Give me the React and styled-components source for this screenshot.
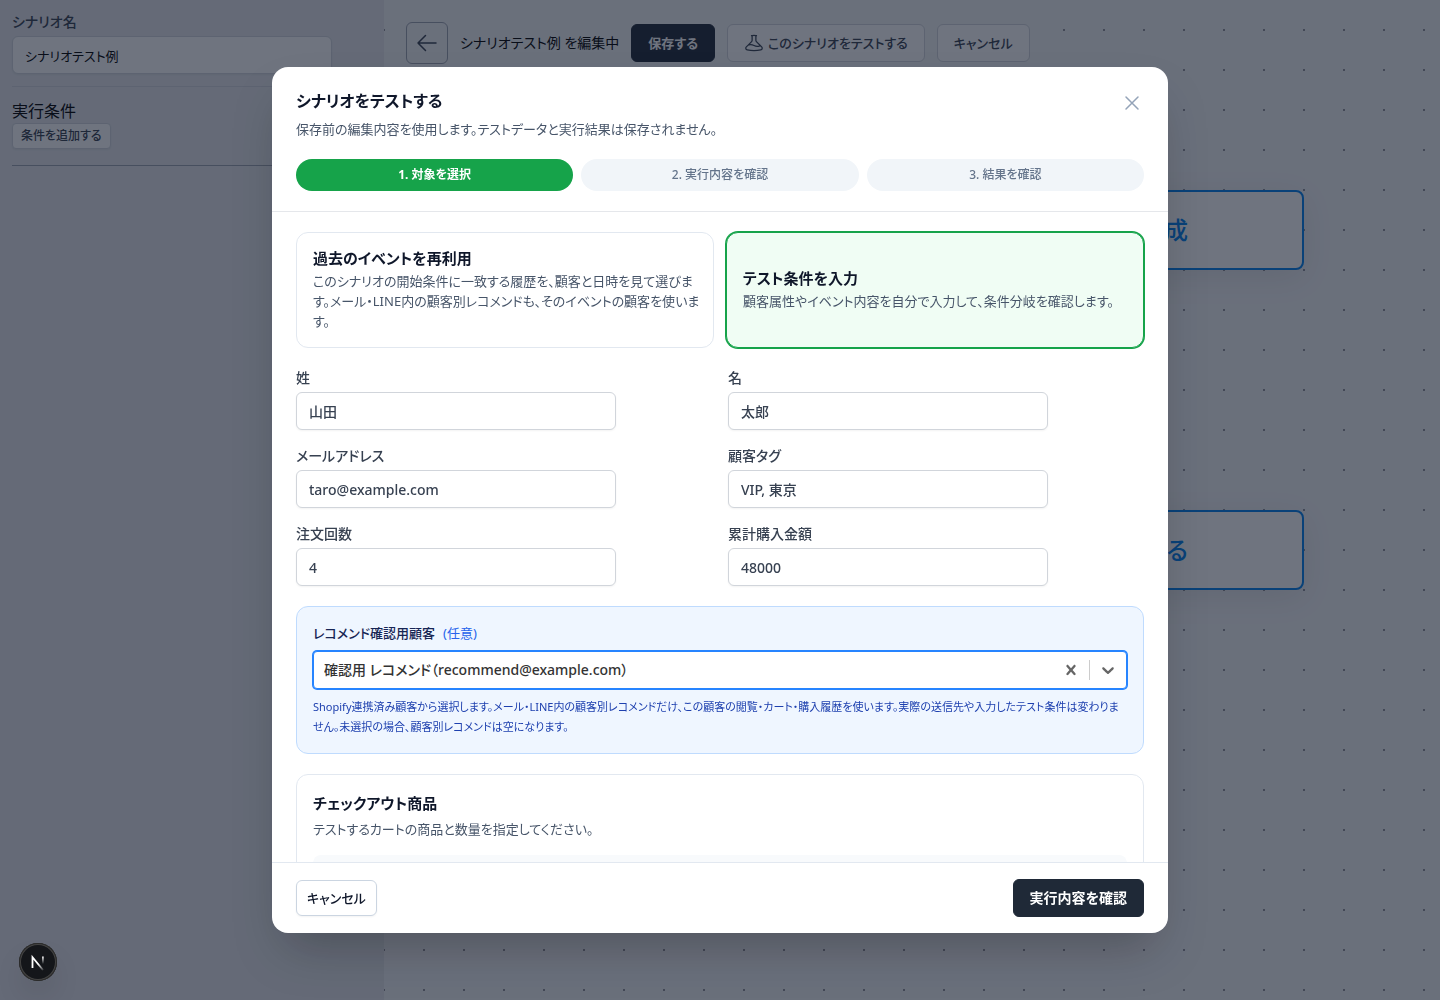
import React, { useState } from "react";
import styled, { createGlobalStyle } from "styled-components";

const STEPS = ["1. 対象を選択", "2. 実行内容を確認", "3. 結果を確認"];

const MODES = [
    {
        id: "history",
        title: "過去のイベントを再利用",
        text: "このシナリオの開始条件に一致する履歴を、顧客と日時を見て選びます。メール・LINE内の顧客別レコメンドも、そのイベントの顧客を使います。",
    },
    {
        id: "manual",
        title: "テスト条件を入力",
        text: "顧客属性やイベント内容を自分で入力して、条件分岐を確認します。",
    },
];

const FIELDS = [
    { name: "lastName", label: "姓" },
    { name: "firstName", label: "名" },
    { name: "email", label: "メールアドレス" },
    { name: "tags", label: "顧客タグ" },
    { name: "orderCount", label: "注文回数" },
    { name: "totalSpent", label: "累計購入金額" },
];

const OutlineIcon = ({ size, path }) => (
    <svg width={size} height={size} viewBox="0 0 24 24" fill="none" stroke="currentColor" strokeWidth="1.5" strokeLinecap="round" strokeLinejoin="round" aria-hidden="true">
        <path d={path} />
    </svg>
);

const ARROW = "M10.5 19.5 3 12m0 0 7.5-7.5M3 12h18";
const CLOSE = "M6 18 18 6M6 6l12 12";
const BEAKER = "M9.75 3.104v5.714a2.25 2.25 0 0 1-.659 1.591L5 14.5M9.75 3.104c-.251.023-.501.05-.75.082m.75-.082a24.301 24.301 0 0 1 4.5 0m0 0v5.714c0 .597.237 1.17.659 1.591L19.8 15.3M14.25 3.104c.251.023.501.05.75.082M19.8 15.3l-1.57.393A9.065 9.065 0 0 1 12 15a9.065 9.065 0 0 0-6.23-.693L5 14.5m14.8.8 1.402 1.402c1.232 1.232.65 3.318-1.067 3.611A48.309 48.309 0 0 1 12 21c-2.773 0-5.491-.235-8.135-.687-1.718-.293-2.3-2.379-1.067-3.61L5 14.5";
const CROSS = "M14.348 14.849c-0.469 0.469-1.229 0.469-1.697 0l-2.651-3.030-2.651 3.029c-0.469 0.469-1.229 0.469-1.697 0-0.469-0.469-0.469-1.229 0-1.697l2.758-3.15-2.759-3.152c-0.469-0.469-0.469-1.228 0-1.697s1.228-0.469 1.697 0l2.652 3.031 2.651-3.031c0.469-0.469 1.228-0.469 1.697 0s0.469 1.229 0 1.697l-2.758 3.152 2.758 3.15c0.469 0.469 0.469 1.229 0 1.698z";
const CHEVRON = "M4.516 7.548c0.436-0.446 1.043-0.481 1.576 0l3.908 3.747 3.908-3.747c0.533-0.481 1.141-0.446 1.574 0 0.436 0.445 0.408 1.197 0 1.615-0.406 0.418-4.695 4.502-4.695 4.502-0.217 0.223-0.502 0.335-0.787 0.335s-0.57-0.112-0.789-0.335c0 0-4.287-4.084-4.695-4.502s-0.436-1.17 0-1.615z";

const SolidIcon = ({ path }) => (
    <svg width="20" height="20" viewBox="0 0 20 20" fill="currentColor" aria-hidden="true">
        <path d={path} />
    </svg>
);

const NextLogo = () => (
    <svg width="38" height="38" viewBox="0 0 38 38" fill="none" aria-hidden="true">
        <defs>
            <linearGradient id="diagonal" x1="21" y1="20" x2="25" y2="26" gradientUnits="userSpaceOnUse">
                <stop stopColor="#fff" />
                <stop offset="1" stopColor="#fff" stopOpacity="0.2" />
            </linearGradient>
            <linearGradient id="stem" x1="24" y1="13" x2="24" y2="21" gradientUnits="userSpaceOnUse">
                <stop stopColor="#fff" />
                <stop offset="1" stopColor="#fff" stopOpacity="0" />
            </linearGradient>
        </defs>
        <path d="M13.5 25V14.2L24 27" stroke="url(#diagonal)" strokeWidth="1.8" />
        <path d="M23.9 13.5V21" stroke="url(#stem)" strokeWidth="1.8" />
    </svg>
);

const App = () => {
    const [scenarioName, setScenarioName] = useState("シナリオテスト例");
    const [mode, setMode] = useState("manual");
    const [customer, setCustomer] = useState("recommend");
    const [form, setForm] = useState({
        lastName: "山田",
        firstName: "太郎",
        email: "taro@example.com",
        tags: "VIP, 東京",
        orderCount: "4",
        totalSpent: "48000",
    });

    const handleChange = (event) => {
        const { name, value } = event.target;
        setForm(prevState => ({ ...prevState, [name]: value }));
    };

    return (
        <>
            <GlobalStyle />
            <Page>
                <Sidebar>
                    <NameSection>
                        <Label htmlFor="scenarioName">シナリオ名</Label>
                        <TextInput id="scenarioName" $plain value={scenarioName} onChange={(e) => setScenarioName(e.target.value)} />
                    </NameSection>
                    <ConditionSection>
                        <ConditionTitle>実行条件</ConditionTitle>
                        <SmallButton type="button">条件を追加する</SmallButton>
                    </ConditionSection>
                </Sidebar>
                <Canvas>
                    <Toolbar>
                        <BackButton type="button" aria-label="戻る"><OutlineIcon size={24} path={ARROW} /></BackButton>
                        <ToolbarTitle>{scenarioName} を編集中</ToolbarTitle>
                        <Button type="button" $primary>保存する</Button>
                        <Button type="button"><OutlineIcon size={20} path={BEAKER} />このシナリオをテストする</Button>
                        <Button type="button">キャンセル</Button>
                    </Toolbar>
                    <Node $top={190}>成</Node>
                    <Node $top={510}>る</Node>
                </Canvas>
            </Page>
            <Overlay>
                <Dialog role="dialog" aria-modal="true" aria-labelledby="dialogTitle">
                    <DialogHeader>
                        <HeaderRow>
                            <div>
                                <DialogTitle id="dialogTitle">シナリオをテストする</DialogTitle>
                                <Description>保存前の編集内容を使用します。テストデータと実行結果は保存されません。</Description>
                            </div>
                            <CloseButton type="button" aria-label="閉じる"><OutlineIcon size={24} path={CLOSE} /></CloseButton>
                        </HeaderRow>
                        <StepList>
                            {STEPS.map((step, index) => <Step key={step} $active={index === 0}>{step}</Step>)}
                        </StepList>
                    </DialogHeader>
                    <DialogBody>
                        <ModeGrid>
                            {MODES.map((item) => (
                                <ModeCard key={item.id} type="button" aria-pressed={mode === item.id} $selected={mode === item.id} onClick={() => setMode(item.id)}>
                                    <ModeTitle>{item.title}</ModeTitle>
                                    <ModeText>{item.text}</ModeText>
                                </ModeCard>
                            ))}
                        </ModeGrid>
                        <FieldGrid>
                            {FIELDS.map((field) => (
                                <Field key={field.name}>
                                    <Label htmlFor={field.name}>{field.label}</Label>
                                    <TextInput id={field.name} name={field.name} value={form[field.name]} onChange={handleChange} />
                                </Field>
                            ))}
                        </FieldGrid>
                        <RecommendBox>
                            <RecommendLabel htmlFor="customer">レコメンド確認用顧客<Optional>(任意)</Optional></RecommendLabel>
                            <SelectBox>
                                <Select id="customer" value={customer} onChange={(e) => setCustomer(e.target.value)}>
                                    <option value="" />
                                    <option value="recommend">確認用 レコメンド（recommend@example.com）</option>
                                </Select>
                                <ClearButton type="button" aria-label="クリア" onClick={() => setCustomer("")}><SolidIcon path={CROSS} /></ClearButton>
                                <Separator />
                                <Arrow><SolidIcon path={CHEVRON} /></Arrow>
                            </SelectBox>
                            <HelpText>Shopify連携済み顧客から選択します。メール・LINE内の顧客別レコメンドだけ、この顧客の閲覧・カート・購入履歴を使います。実際の送信先や入力したテスト条件は変わりません。未選択の場合、顧客別レコメンドは空になります。</HelpText>
                        </RecommendBox>
                        <ProductBox>
                            <ProductTitle>チェックアウト商品</ProductTitle>
                            <Description>テストするカートの商品と数量を指定してください。</Description>
                            <ProductRow />
                        </ProductBox>
                    </DialogBody>
                    <DialogFooter>
                        <CancelButton type="button">キャンセル</CancelButton>
                        <SubmitButton type="button" $primary>実行内容を確認</SubmitButton>
                    </DialogFooter>
                </Dialog>
            </Overlay>
            <DevBadge type="button" aria-label="Next.js"><NextLogo /></DevBadge>
        </>
    );
};

const GlobalStyle = createGlobalStyle`
    *, *::before, *::after {
        box-sizing: border-box;
    }
    body {
        margin: 0;
        color: #000000;
        font-family: "Noto Sans", "Noto Sans CJK JP", sans-serif;
        font-size: 16px;
        line-height: 24px;
        font-feature-settings: "palt";
    }
    h1, h2, h3, p, ol {
        margin: 0;
        padding: 0;
    }
    button, input, select {
        margin: 0;
        font-family: inherit;
        font-feature-settings: inherit;
    }
    svg {
        display: block;
        flex-shrink: 0;
    }
`;

const Page = styled.div`
    display: flex;
    height: 100vh;
    overflow: hidden;
`;
const Sidebar = styled.aside`
    width: 384px;
    flex-shrink: 0;
    padding: 12px;
    background-color: #e5e7eb;
`;
const NameSection = styled.div`
    padding-bottom: 12px;
    border-bottom: 1px solid #d1d5db;
`;
const ConditionSection = styled.div`
    padding: 12px 0 16px;
    border-bottom: 1px solid #9ca3af;
`;
const ConditionTitle = styled.h2`
    font-size: 16px;
    font-weight: 400;
    line-height: 24px;
`;
const SmallButton = styled.button`
    display: block;
    height: 26px;
    padding: 0 8px;
    color: #374151;
    font-size: 12px;
    font-weight: 500;
    line-height: 16px;
    background-color: #ffffff;
    border: 1px solid #d1d5db;
    border-radius: 4px;
    box-shadow: 0 1px 2px rgba(0, 0, 0, 0.05);
`;
const Canvas = styled.main`
    position: relative;
    flex: 1;
    overflow: hidden;
    background-color: #f3f4f6;
    background-image: radial-gradient(circle at center, #91919a 1px, transparent 1px);
    background-size: 40px 40px;
    background-position: -20px 10px;
`;
const Toolbar = styled.div`
    display: flex;
    align-items: center;
    gap: 12px;
    width: fit-content;
    margin: 10px;
    padding: 12px;
    background-color: #f3f4f6;
`;
const ToolbarTitle = styled.h1`
    font-size: 14px;
    font-weight: 400;
    line-height: 24px;
    white-space: nowrap;
`;
const BackButton = styled.button`
    display: flex;
    align-items: center;
    justify-content: center;
    width: 42px;
    height: 42px;
    padding: 0;
    color: #374151;
    background: none;
    border: 1px solid #9ca3af;
    border-radius: 6px;
`;
const Button = styled.button`
    display: flex;
    align-items: center;
    gap: 4px;
    height: 38px;
    padding: 0 16px;
    color: ${({ $primary }) => ($primary ? "#ffffff" : "#374151")};
    font-size: 13px;
    font-weight: ${({ $primary }) => ($primary ? 700 : 500)};
    line-height: 20px;
    white-space: nowrap;
    background-color: ${({ $primary }) => ($primary ? "#1f2937" : "#ffffff")};
    border: 1px solid ${({ $primary }) => ($primary ? "#1f2937" : "#d1d5db")};
    border-radius: 6px;
`;
const SubmitButton = styled(Button)`
    font-size: 14px;
`;
const Node = styled.div`
    position: absolute;
    top: ${({ $top }) => $top}px;
    left: 520px;
    display: flex;
    align-items: center;
    justify-content: flex-end;
    width: 400px;
    height: 80px;
    padding-right: 114px;
    color: #0080ee;
    font-size: 24px;
    font-weight: 500;
    line-height: 32px;
    background-color: #ffffff;
    border: 2px solid #0080ee;
    border-radius: 8px;
    box-shadow: 0 8px 32px rgba(0, 0, 0, 0.08);
`;
const Overlay = styled.div`
    position: fixed;
    inset: 0;
    display: flex;
    align-items: center;
    justify-content: center;
    padding: 67px 24px;
    background-color: rgba(15, 23, 42, 0.6);
`;
const Dialog = styled.section`
    display: flex;
    flex-direction: column;
    width: 100%;
    max-width: 896px;
    max-height: 100%;
    overflow: hidden;
    background-color: #ffffff;
    border-radius: 16px;
    box-shadow: 0 25px 50px -12px rgba(0, 0, 0, 0.25);
`;
const DialogHeader = styled.header`
    flex-shrink: 0;
    padding: 20px 24px;
    border-bottom: 1px solid #e5e7eb;
`;
const HeaderRow = styled.div`
    display: flex;
    align-items: flex-start;
    justify-content: space-between;
`;
const DialogTitle = styled.h2`
    color: #0f172a;
    font-size: 16px;
    font-weight: 600;
    line-height: 28px;
`;
const Description = styled.p`
    margin-top: 4px;
    color: #475569;
    font-size: 13px;
    line-height: 20px;
`;
const CloseButton = styled.button`
    display: flex;
    margin-top: 4px;
    padding: 0;
    color: #94a3b8;
    background: none;
    border: 0;
`;
const StepList = styled.ol`
    display: grid;
    grid-template-columns: repeat(3, 1fr);
    gap: 8px;
    margin-top: 20px;
    list-style: none;
`;
const Step = styled.li`
    padding: 8px 12px;
    color: ${({ $active }) => ($active ? "#ffffff" : "#64748b")};
    font-size: 12px;
    font-weight: ${({ $active }) => ($active ? 700 : 500)};
    line-height: 16px;
    text-align: center;
    background-color: ${({ $active }) => ($active ? "#16a34a" : "#f1f5f9")};
    border-radius: 16px;
`;
const DialogBody = styled.div`
    display: flex;
    flex: 1;
    flex-direction: column;
    gap: 20px;
    min-height: 0;
    padding: 20px 24px;
    overflow: hidden;
`;
const ModeGrid = styled.div`
    display: grid;
    flex-shrink: 0;
    grid-template-columns: 1fr 1fr;
    gap: 12px;
`;
const ModeCard = styled.button`
    display: flex;
    flex-direction: column;
    justify-content: center;
    padding: 16px 12px 16px 16px;
    text-align: left;
    background-color: ${({ $selected }) => ($selected ? "#f0fdf4" : "#ffffff")};
    border: 1px solid ${({ $selected }) => ($selected ? "#16a34a" : "#e2e8f0")};
    border-radius: 12px;
    box-shadow: ${({ $selected }) => ($selected ? "0 0 0 1px #16a34a" : "none")};
`;
const ModeTitle = styled.span`
    margin-bottom: 4px;
    color: #0f172a;
    font-size: 15px;
    font-weight: 600;
    line-height: 18px;
`;
const ModeText = styled.span`
    color: #475569;
    font-size: 13px;
    line-height: 20px;
`;
const FieldGrid = styled.div`
    display: grid;
    flex-shrink: 0;
    grid-template-columns: 1fr 1fr;
    gap: 16px;
`;
const Field = styled.div`
    min-width: 0;
`;
const Label = styled.label`
    display: block;
    margin-bottom: 4px;
    color: #374151;
    font-size: 14px;
    font-weight: 500;
    line-height: 20px;
`;
const TextInput = styled.input`
    display: block;
    width: 100%;
    max-width: 320px;
    height: 38px;
    padding: 0 12px;
    color: ${({ $plain }) => ($plain ? "#000000" : "#374151")};
    font-size: ${({ $plain }) => ($plain ? 13 : 14)}px;
    font-weight: ${({ $plain }) => ($plain ? 400 : 500)};
    line-height: 20px;
    background-color: #ffffff;
    border: 1px solid #d1d5db;
    border-radius: 6px;
    box-shadow: 0 1px 2px rgba(0, 0, 0, 0.05);
`;
const RecommendBox = styled.div`
    flex-shrink: 0;
    padding: 16px;
    background-color: #eff6ff;
    border: 1px solid #bfdbfe;
    border-radius: 12px;
`;
const RecommendLabel = styled.label`
    display: block;
    margin-bottom: 8px;
    color: #172554;
    font-size: 13px;
    font-weight: 500;
    line-height: 20px;
`;
const Optional = styled.span`
    margin-left: 8px;
    color: #2563eb;
    font-weight: 400;
`;
const SelectBox = styled.div`
    display: flex;
    align-items: center;
    height: 38px;
    color: #666666;
    background-color: #ffffff;
    border: 1px solid #2684ff;
    border-radius: 4px;
    box-shadow: 0 0 0 1px #2684ff;
`;
const Select = styled.select`
    flex: 1;
    min-width: 0;
    height: 36px;
    padding: 0 10px;
    color: #333333;
    font-size: 14px;
    font-weight: 500;
    line-height: 20px;
    background: none;
    border: 0;
    outline: 0;
    appearance: none;
`;
const ClearButton = styled.button`
    display: flex;
    padding: 8px;
    color: inherit;
    background: none;
    border: 0;
`;
const Separator = styled.span`
    width: 1px;
    height: 20px;
    background-color: #cccccc;
`;
const Arrow = styled.span`
    padding: 8px;
    pointer-events: none;
`;
const HelpText = styled.p`
    margin-top: 8px;
    color: #1e40af;
    font-size: 11px;
    line-height: 20px;
`;
const ProductBox = styled.div`
    flex-shrink: 0;
    padding: 16px;
    border: 1px solid #e2e8f0;
    border-radius: 12px;
`;
const ProductTitle = styled.h3`
    color: #0f172a;
    font-size: 15px;
    font-weight: 600;
    line-height: 24px;
`;
const ProductRow = styled.div`
    height: 96px;
    margin-top: 16px;
    background-color: #f8fafc;
    border-radius: 8px;
`;
const DialogFooter = styled.footer`
    display: flex;
    flex-shrink: 0;
    align-items: center;
    justify-content: space-between;
    padding: 16px 24px;
    border-top: 1px solid #e2e8f0;
`;
const CancelButton = styled.button`
    height: 36px;
    padding: 0 10px;
    color: #0f172a;
    font-size: 13px;
    font-weight: 500;
    line-height: 20px;
    background-color: #ffffff;
    border: 1px solid #cbd5e1;
    border-radius: 6px;
    box-shadow: 0 1px 2px rgba(0, 0, 0, 0.05);
`;
const DevBadge = styled.button`
    position: fixed;
    bottom: 19px;
    left: 19px;
    width: 38px;
    height: 38px;
    padding: 0;
    background-color: #14161a;
    border: 0;
    border-radius: 50%;
    box-shadow: inset 0 0 0 1px #2a2a2a, inset 0 0 0 2px #444444, 0 16px 32px -8px rgba(0, 0, 0, 0.24);
`;
export default App;
